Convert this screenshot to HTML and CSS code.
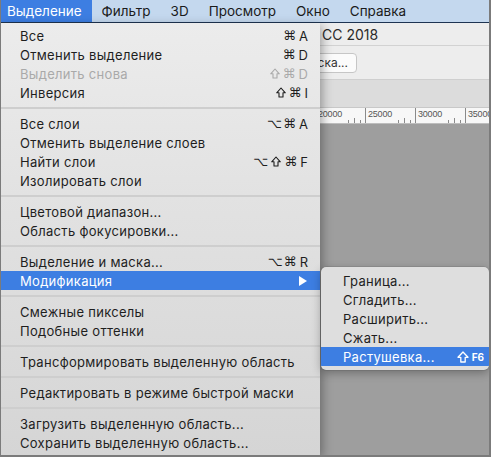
FILE: index.html
```html
<!DOCTYPE html>
<html lang="ru">
<head>
<meta charset="utf-8">
<title>Выделение</title>
<link rel="stylesheet" href="styles.css">
</head>
<body>
<div class="screen">
  <header class="menubar">
    <span class="mb-item active first">Выделение</span>
    <span class="mb-item">Фильтр</span>
    <span class="mb-item">3D</span>
    <span class="mb-item">Просмотр</span>
    <span class="mb-item">Окно</span>
    <span class="mb-item">Справка</span>
  </header>

  <main class="app">
    <div class="titlebar"><span class="title">CC 2018</span></div>
    <div class="optionsbar">
      <div class="opt-clip"><span class="opt-button">Маска...</span></div>
    </div>
    <div class="panelstrip"></div>
    <div class="ruler">
      <div class="seg"><span class="lbl">20000</span><i class="t t1"></i><i class="t t2"></i><i class="t t3"></i></div>
      <div class="seg"><span class="lbl">25000</span><i class="t t1"></i><i class="t t2"></i><i class="t t3"></i></div>
      <div class="seg"><span class="lbl">30000</span><i class="t t1"></i><i class="t t2"></i><i class="t t3"></i></div>
      <div class="seg"><span class="lbl">35000</span><i class="t t1"></i><i class="t t2"></i><i class="t t3"></i></div>
    </div>
    <div class="canvas"></div>
  </main>

  <nav class="menu">
    <div class="row"><span>Все</span><span class="sc"><span class="sym">⌘</span>A</span></div>
    <div class="row"><span>Отменить выделение</span><span class="sc"><span class="sym">⌘</span>D</span></div>
    <div class="row disabled"><span>Выделить снова</span><span class="sc"><svg class="shift-ic" viewBox="0 0 10 11" width="10" height="11"><path d="M5 1 L9.3 5.8 H7 V10 H3 V5.8 H0.7 Z"/></svg><span class="sym">⌘</span>D</span></div>
    <div class="row"><span>Инверсия</span><span class="sc"><svg class="shift-ic" viewBox="0 0 10 11" width="10" height="11"><path d="M5 1 L9.3 5.8 H7 V10 H3 V5.8 H0.7 Z"/></svg><span class="sym">⌘</span>I</span></div>
    <div class="sep"></div>
    <div class="row"><span>Все слои</span><span class="sc"><span class="sym">⌥⌘</span>A</span></div>
    <div class="row"><span>Отменить выделение слоев</span></div>
    <div class="row"><span>Найти слои</span><span class="sc"><span class="sym">⌥</span><svg class="shift-ic" viewBox="0 0 10 11" width="10" height="11"><path d="M5 1 L9.3 5.8 H7 V10 H3 V5.8 H0.7 Z"/></svg><span class="sym">⌘</span>F</span></div>
    <div class="row"><span>Изолировать слои</span></div>
    <div class="sep"></div>
    <div class="row"><span>Цветовой диапазон...</span></div>
    <div class="row"><span>Область фокусировки...</span></div>
    <div class="sep"></div>
    <div class="row"><span>Выделение и маска...</span><span class="sc"><span class="sym">⌥⌘</span>R</span></div>
    <div class="row selected"><span>Модификация</span><span class="arrow"></span></div>
    <div class="sep"></div>
    <div class="row"><span>Смежные пикселы</span></div>
    <div class="row"><span>Подобные оттенки</span></div>
    <div class="sep"></div>
    <div class="row"><span>Трансформировать выделенную область</span></div>
    <div class="sep"></div>
    <div class="row"><span>Редактировать в режиме быстрой маски</span></div>
    <div class="sep"></div>
    <div class="row"><span>Загрузить выделенную область...</span></div>
    <div class="row"><span>Сохранить выделенную область...</span></div>
  </nav>

  <nav class="submenu">
    <div class="row"><span>Граница...</span></div>
    <div class="row"><span>Сгладить...</span></div>
    <div class="row"><span>Расширить...</span></div>
    <div class="row"><span>Сжать...</span></div>
    <div class="row selected"><span>Растушевка...</span><span class="sc2"><svg class="shift-big" viewBox="0 0 12 12" width="12" height="12"><path d="M6 1 L11 6.3 H8.2 V11 H3.8 V6.3 H1 Z"/></svg><b>F6</b></span></div>
  </nav>
</div>
</body>
</html>
```

FILE: styles.css
```css
* { box-sizing: border-box; }
html, body { margin: 0; padding: 0; background: #7b7b7b; }
body { font-family: Inter, "Liberation Sans", Arial, sans-serif; }

.screen {
  position: relative;
  width: 491px;
  height: 457px;
  overflow: hidden;
  border-left: 1px solid #7b7b7b;
  border-right: 2px solid #7b7b7b;
  border-bottom: 2px solid #7b7b7b;
  background: #9e9e9e;
  display: flex;
  flex-direction: column;
}

/* ---------- menu bar ---------- */
.menubar {
  height: 23px;
  flex: none;
  display: flex;
  align-items: stretch;
  background: #c4d8ee;
  border-bottom: 1px solid #1e3452;
  font-size: 13.5px;
  color: #1b1b1b;
}
.mb-item {
  display: flex;
  align-items: center;
  padding: 0 10px;
}
.mb-item.first { padding-left: 6px; }
.mb-item.active { background: #3d7ee2; color: #fff; }

/* ---------- app window behind ---------- */
.app {
  flex: 1;
  display: flex;
  flex-direction: column;
  min-height: 0;
}
.titlebar {
  height: 23px;
  flex: none;
  background: #ededed;
  border-bottom: 1px solid #d2d2d2;
  display: flex;
  align-items: center;
  padding-left: 321px;
  font-size: 14px;
  color: #2a2a2a;
}
.optionsbar {
  height: 34px;
  flex: none;
  background: #ededed;
  border-bottom: 1px solid #cfcfcf;
  display: flex;
  align-items: center;
  padding-left: 319px;
}
.opt-clip {
  width: 37px;
  overflow: hidden;
  display: flex;
  justify-content: flex-end;
}
.opt-button {
  flex: none;
  height: 20px;
  padding: 0 8px;
  display: flex;
  align-items: center;
  background: #fbfbfb;
  border: 1px solid #c6c6c6;
  border-radius: 4px;
  font-size: 12px;
  color: #333;
}
.panelstrip {
  height: 28px;
  flex: none;
  background: #dcdcdc;
  border-bottom: 1px solid #c8c8c8;
}
.ruler {
  height: 16px;
  flex: none;
  background: #f7f7f7;
  border-bottom: 1px solid #bdbdbd;
  display: flex;
  padding-left: 314px;
}
.seg {
  position: relative;
  width: 50px;
  flex: none;
  border-left: 1px solid #8a8a8a;
  font-family: "Liberation Sans", Arial, sans-serif;
  font-size: 9px;
  color: #555;
}
.lbl { position: absolute; left: 2px; top: 1px; letter-spacing: -0.2px; }
.t { position: absolute; bottom: 0; width: 1px; height: 3px; background: #8a8a8a; }
.t1 { left: 32px; }
.t2 { left: 38px; height: 5px; }
.t3 { left: 44px; }
.canvas { flex: 1; background: #9e9e9e; }

/* ---------- dropdown menu ---------- */
.menu {
  position: absolute;
  left: 0;
  top: 23px;
  width: 319px;
  height: 432px;
  padding: 3px 0;
  background: linear-gradient(#ececec, #e2e2e2 40%, #d5d5d5);
  box-shadow: 2px 3px 10px rgba(0, 0, 0, 0.35);
  font-size: 13px;
  letter-spacing: 0.3px;
  color: #1e1e1e;
}
.row {
  height: 19px;
  display: flex;
  align-items: center;
  padding: 0 12px 0 19px;
  white-space: nowrap;
}
.row.disabled { color: #a9a9a9; }
.row.selected { background: #3d7ee2; color: #fff; }
.sep {
  height: 12px;
  display: flex;
  align-items: center;
}
.sep::before {
  content: "";
  display: block;
  width: 100%;
  height: 2px;
  background: #cecece;
}
.sc { margin-left: auto; display: flex; align-items: center; gap: 2px; letter-spacing: 0; }
.sym { font-family: "DejaVu Sans", sans-serif; font-size: 13px; letter-spacing: 1px; }
.shift-ic { fill: none; stroke: currentColor; stroke-width: 1.1; stroke-linejoin: round; margin-right: 1px; }
.arrow {
  margin-left: auto;
  margin-right: 1px;
  width: 0;
  height: 0;
  border-top: 5px solid transparent;
  border-bottom: 5px solid transparent;
  border-left: 8px solid #fff;
}

/* ---------- submenu ---------- */
.submenu {
  position: absolute;
  left: 320px;
  top: 267px;
  width: 168px;
  padding: 4px 0;
  background: #dedede;
  border-radius: 5px;
  box-shadow: 0 3px 10px rgba(0, 0, 0, 0.3), 0 0 0 0.5px rgba(0, 0, 0, 0.15);
  font-size: 13px;
  letter-spacing: 0.3px;
  color: #1e1e1e;
  overflow: hidden;
}
.submenu .row { padding: 0 5px 0 22px; }
.sc2 { margin-left: auto; display: flex; align-items: center; gap: 3px; letter-spacing: 0; }
.shift-big { fill: none; stroke: #fff; stroke-width: 1.3; stroke-linejoin: round; }
.sc2 b { font-size: 10px; font-weight: 700; }
```
